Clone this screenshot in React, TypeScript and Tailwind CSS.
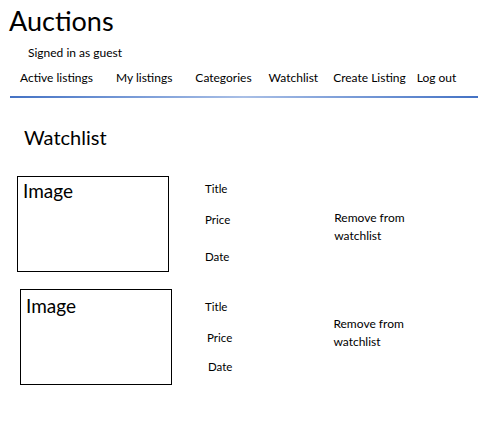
import React from "react";

const navItems: { label: string; ml: string }[] = [
  { label: "Active listings", ml: "ml-[20px]" },
  { label: "My listings", ml: "ml-[23px]" },
  { label: "Categories", ml: "ml-[23px]" },
  { label: "Watchlist", ml: "ml-[17px]" },
  { label: "Create Listing", ml: "ml-[15px]" },
  { label: "Log out", ml: "ml-[11px]" },
];

export default function App() {
  return (
    <div className="w-[480px] h-[430px] bg-white text-black font-['Lato','Open_Sans',sans-serif] overflow-hidden">
      <h1 className="pl-[9px] pt-[3px] text-[27px] leading-[36px] font-normal">Auctions</h1>
      <div className="pl-[28px] mt-[6px] text-[12px] leading-[16px]">Signed in as guest</div>
      <nav className="flex mt-[9px] text-[12px] leading-[16px]">
        {navItems.map((n) => (
          <span key={n.label} className={n.ml}>
            {n.label}
          </span>
        ))}
      </nav>
      <div className="ml-[10px] mt-[10px] w-[468px] h-[2px] bg-gradient-to-r from-[#4472c4] via-[#a9bfe6] to-[#4472c4]" />
      <h2 className="pl-[24px] mt-[27px] text-[20px] leading-[24px] font-normal">Watchlist</h2>

      <div className="flex mt-[27px] pl-[17px]">
        <div className="w-[152px] h-[96px] border border-black pl-[5px] pt-[2px] text-[19px] leading-[24px]">Image</div>
        <div className="ml-[36px] pt-[6px] text-[11.5px] leading-[14px] flex flex-col">
          <span>Title</span>
          <span className="mt-[17px]">Price</span>
          <span className="mt-[23px]">Date</span>
        </div>
        <div className="ml-[104px] pt-[33px] text-[12px] leading-[18px] flex flex-col">
          <span>Remove from</span>
          <span>watchlist</span>
        </div>
      </div>

      <div className="flex mt-[17px] pl-[20px]">
        <div className="w-[152px] h-[96px] border border-black pl-[5px] pt-[4px] text-[19px] leading-[24px]">Image</div>
        <div className="ml-[33px] pt-[11px] text-[11.5px] leading-[14px] flex flex-col">
          <span>Title</span>
          <span className="mt-[17px] ml-[2px]">Price</span>
          <span className="mt-[15px] ml-[3px]">Date</span>
        </div>
        <div className="ml-[101px] pt-[26px] text-[12px] leading-[18px] flex flex-col">
          <span>Remove from</span>
          <span>watchlist</span>
        </div>
      </div>
    </div>
  );
}
